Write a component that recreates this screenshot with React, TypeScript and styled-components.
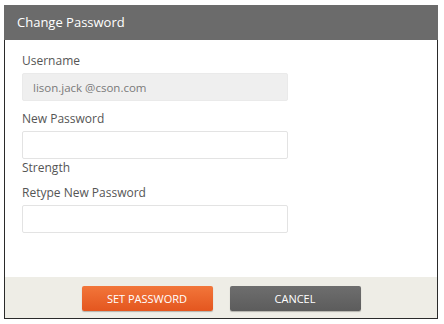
import styled, { createGlobalStyle } from 'styled-components'

const GlobalStyle = createGlobalStyle`
  html, body {
    margin: 0;
    padding: 0;
    background: #ffffff;
  }
  body {
    font-family: "Open Sans", "Noto Sans", sans-serif;
  }
`

const Dialog = styled.div`
  box-sizing: border-box;
  width: 434px;
  height: 314px;
  margin: 5px 0 0 4px;
  border: 1px solid #2a2a2a;
  border-top: none;
  background: #ffffff;
  display: flex;
  flex-direction: column;
`

const Header = styled.div`
  height: 35px;
  margin: 0 -1px;
  background: #6b6b6b;
  color: #ffffff;
  font-size: 13px;
  display: flex;
  align-items: center;
  padding-left: 13px;
  padding-bottom: 1px;
  box-sizing: border-box;
`

const Body = styled.div`
  flex: 1;
  display: flex;
  flex-direction: column;
  padding: 13px 0 0 17px;
`

const Label = styled.div<{ $gap?: number }>`
  font-size: 12px;
  line-height: 16px;
  color: #555555;
  margin-top: ${(p) => p.$gap ?? 0}px;
  margin-bottom: 4px;
`

const Field = styled.div<{ $filled?: boolean }>`
  box-sizing: border-box;
  width: 266px;
  height: 28px;
  border: 1px solid ${(p) => (p.$filled ? '#eaeaea' : '#e3e3e3')};
  border-radius: 2px;
  background: ${(p) => (p.$filled ? '#efefef' : '#ffffff')};
  color: #7a7a7a;
  font-size: 11.5px;
  display: flex;
  align-items: center;
  padding-left: 10px;
`

const Footer = styled.div`
  height: 41px;
  background: #eeede6;
  display: flex;
  justify-content: center;
  align-items: center;
  gap: 17px;
  padding-top: 1px;
  box-sizing: border-box;
`

const Button = styled.button<{ $primary?: boolean }>`
  width: 131px;
  height: 25px;
  border: none;
  border-radius: 2px;
  font-family: "Open Sans", "Noto Sans", sans-serif;
  font-size: 11px;
  color: #ffffff;
  text-transform: uppercase;
  background: ${(p) =>
    p.$primary
      ? 'linear-gradient(#f2763a, #e4561f)'
      : 'linear-gradient(#6e6e6e, #5c5c5c)'};
  box-shadow: 0 1px 1px rgba(0, 0, 0, 0.25);
  cursor: pointer;
  padding: 0;
`

export default function App() {
  return (
    <>
      <GlobalStyle />
      <Dialog>
        <Header>Change Password</Header>
        <Body>
          <Label>Username</Label>
          <Field $filled>lison.jack @cson.com</Field>
          <Label $gap={10}>New Password</Label>
          <Field />
          <Label $gap={1}>Strength</Label>
          <Label $gap={5}>Retype New Password</Label>
          <Field />
        </Body>
        <Footer>
          <Button $primary>Set Password</Button>
          <Button>Cancel</Button>
        </Footer>
      </Dialog>
    </>
  )
}
